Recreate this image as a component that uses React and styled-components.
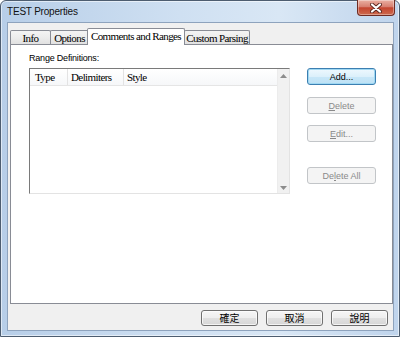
import React from "react";
import styled, { createGlobalStyle } from "styled-components";

const GlobalStyle = createGlobalStyle`
  html, body {
    margin: 0;
    padding: 0;
    background: #ffffff;
  }
  * {
    box-sizing: border-box;
  }
`;

const Window = styled.div`
  width: 400px;
  height: 337px;
  display: flex;
  flex-direction: column;
  border: 1px solid #4d5d70;
  border-radius: 6px 6px 0 0;
  background: linear-gradient(to right, #b7cee8, #cfe0f2 45%, #d9e7f5 70%, #bfd4ec);
  box-shadow: inset 0 0 0 1px rgba(255, 255, 255, 0.55);
  padding: 0 5px 5px 6px;
`;

const TitleBar = styled.div`
  height: 21px;
  flex: none;
  display: flex;
  align-items: flex-start;
`;

const Title = styled.div`
  padding-top: 5px;
  font: 10px "Liberation Sans", Arial, sans-serif;
  letter-spacing: -0.2px;
  line-height: 12px;
  color: #111;
`;

const CloseButton = styled.div`
  width: 38px;
  height: 16px;
  margin: -1px -1px 0 auto;
  display: flex;
  align-items: center;
  justify-content: center;
  border: 1px solid #6e2b23;
  border-top: none;
  border-radius: 0 0 4px 4px;
  background: linear-gradient(#eab0a2, #d77f70 45%, #c4452f 52%, #cd6a4e 100%);
  box-shadow: inset 0 0 0 1px rgba(255, 255, 255, 0.35);
`;

const Client = styled.div`
  flex: 1;
  display: flex;
  flex-direction: column;
  background: #f0f0f0;
  border: 1px solid #8ea3bd;
  padding: 5px 0 0 2px;
`;

const TabRow = styled.div`
  height: 16px;
  flex: none;
  display: flex;
  align-items: flex-end;
  position: relative;
  z-index: 2;
`;

const Tab = styled.div`
  width: ${(p) => p.$w}px;
  height: ${(p) => (p.$active ? 17 : 14)}px;
  margin-left: ${(p) => p.$ml}px;
  margin-bottom: ${(p) => (p.$active ? -1 : 0)}px;
  position: relative;
  z-index: ${(p) => (p.$active ? 2 : 1)};
  display: flex;
  align-items: center;
  justify-content: center;
  border: 1px solid #898c95;
  border-bottom: none;
  border-radius: 2px 2px 0 0;
  background: ${(p) =>
    p.$active ? "#ffffff" : "linear-gradient(#f4f4f4, #ececec 50%, #e1e1e1)"};
  font: 11px "Liberation Serif", "Times New Roman", serif;
  letter-spacing: -0.6px;
  color: #000;
  white-space: nowrap;
  padding-bottom: ${(p) => (p.$active ? 2 : 0)}px;
`;

const Panel = styled.div`
  flex: 1;
  display: flex;
  flex-direction: column;
  background: #ffffff;
  border: 1px solid #898c95;
  padding: 7px 0 0 18px;
`;

const Label = styled.div`
  font: 9px "Liberation Sans", Arial, sans-serif;
  letter-spacing: -0.2px;
  line-height: 12px;
  color: #000;
  margin-bottom: 4px;
`;

const Body = styled.div`
  display: flex;
  align-items: flex-start;
  gap: 17px;
`;

const ListBox = styled.div`
  width: 261px;
  height: 126px;
  display: flex;
  border-top: 1px solid #7a7a7a;
  border-left: 1px solid #7a7a7a;
  border-right: 1px solid #e3e3e3;
  border-bottom: 1px solid #e3e3e3;
  background: #ffffff;
`;

const ListMain = styled.div`
  flex: 1;
  display: flex;
  flex-direction: column;
`;

const Header = styled.div`
  height: 17px;
  display: flex;
  background: linear-gradient(#ffffff, #f6f7f9);
  border-bottom: 1px solid #e5e5e5;
`;

const HeaderCell = styled.div`
  width: ${(p) => (p.$w ? `${p.$w}px` : "auto")};
  flex: ${(p) => (p.$w ? "none" : 1)};
  display: flex;
  align-items: center;
  padding-left: ${(p) => p.$pl}px;
  border-right: ${(p) => (p.$w ? "1px solid #e3e3e3" : "none")};
  font: 11px "Liberation Serif", "Times New Roman", serif;
  letter-spacing: -0.6px;
  color: #000;
`;

const ScrollBar = styled.div`
  width: 12px;
  display: flex;
  flex-direction: column;
  justify-content: space-between;
  align-items: center;
  padding: 5px 0 3px;
  background: #f1f1f1;
  border-left: 1px solid #ececec;
`;

const ButtonColumn = styled.div`
  display: flex;
  flex-direction: column;
`;

const Button = styled.button`
  width: ${(p) => p.$w}px;
  height: ${(p) => p.$h}px;
  margin-top: ${(p) => p.$mt || 0}px;
  padding: 0;
  display: flex;
  align-items: center;
  justify-content: center;
  border-radius: 3px;
  border: 1px solid
    ${(p) => (p.$default ? "#3c7fb1" : p.disabled ? "#c2c5c8" : "#707070")};
  background: ${(p) =>
    p.$default
      ? "linear-gradient(#eef8fe, #dcf0fb 50%, #c8e7f8 51%, #bde1f5)"
      : p.disabled
      ? "#f4f4f4"
      : "linear-gradient(#f6f6f6, #eeeeee 50%, #e0e0e0 51%, #d6d6d6)"};
  box-shadow: ${(p) =>
    p.$default
      ? "inset 0 0 0 1px #9fd8f3"
      : p.disabled
      ? "none"
      : "inset 0 0 0 1px rgba(255,255,255,0.7)"};
  color: ${(p) => (p.disabled ? "#8a8a8a" : "#000")};
  font: ${(p) =>
    p.$cjk
      ? '10px "Noto Sans CJK TC", "Noto Sans CJK SC", sans-serif'
      : '9px "Liberation Sans", Arial, sans-serif'};
  line-height: 12px;
`;

const Footer = styled.div`
  height: 26px;
  flex: none;
  display: flex;
  justify-content: flex-end;
  gap: 8px;
  padding: 6px 5px 0 0;
`;

const Arrow = ({ up }) => (
  <svg width="7" height="4" viewBox="0 0 7 4">
    <path d={up ? "M0 4 L3.5 0 L7 4 Z" : "M0 0 L3.5 4 L7 0 Z"} fill="#8c8c8c" />
  </svg>
);

const CloseGlyph = () => (
  <svg width="12" height="10" viewBox="0 0 12 10">
    <path d="M2 1.5 L10 8.5 M10 1.5 L2 8.5" stroke="#5b2720" strokeWidth="4" strokeLinecap="round" />
    <path d="M2 1.5 L10 8.5 M10 1.5 L2 8.5" stroke="#ffffff" strokeWidth="2.2" strokeLinecap="round" />
  </svg>
);

export default function App() {
  return (
    <>
      <GlobalStyle />
      <Window>
        <TitleBar>
          <Title>TEST Properties</Title>
          <CloseButton>
            <CloseGlyph />
          </CloseButton>
        </TitleBar>
        <Client>
          <TabRow>
            <Tab $w={41} $ml={0}>Info</Tab>
            <Tab $w={39} $ml={-1}>Options</Tab>
            <Tab $w={98} $ml={-2} $active>Comments and Ranges</Tab>
            <Tab $w={66} $ml={-1}>Custom Parsing</Tab>
          </TabRow>
          <Panel>
            <Label>Range Definitions:</Label>
            <Body>
              <ListBox>
                <ListMain>
                  <Header>
                    <HeaderCell $w={38} $pl={5}>Type</HeaderCell>
                    <HeaderCell $w={56} $pl={3}>Delimiters</HeaderCell>
                    <HeaderCell $pl={3}>Style</HeaderCell>
                  </Header>
                </ListMain>
                <ScrollBar>
                  <Arrow up />
                  <Arrow />
                </ScrollBar>
              </ListBox>
              <ButtonColumn>
                <Button $w={69} $h={17} $default>Add...</Button>
                <Button $w={69} $h={17} $mt={12} disabled>
                  <u>D</u>elete
                </Button>
                <Button $w={69} $h={17} $mt={11} disabled>
                  <u>E</u>dit...
                </Button>
                <Button $w={69} $h={17} $mt={25} disabled>
                  De<u>l</u>ete All
                </Button>
              </ButtonColumn>
            </Body>
          </Panel>
          <Footer>
            <Button $w={57} $h={16} $cjk>確定</Button>
            <Button $w={57} $h={16} $cjk>取消</Button>
            <Button $w={57} $h={16} $cjk>說明</Button>
          </Footer>
        </Client>
      </Window>
    </>
  );
}
